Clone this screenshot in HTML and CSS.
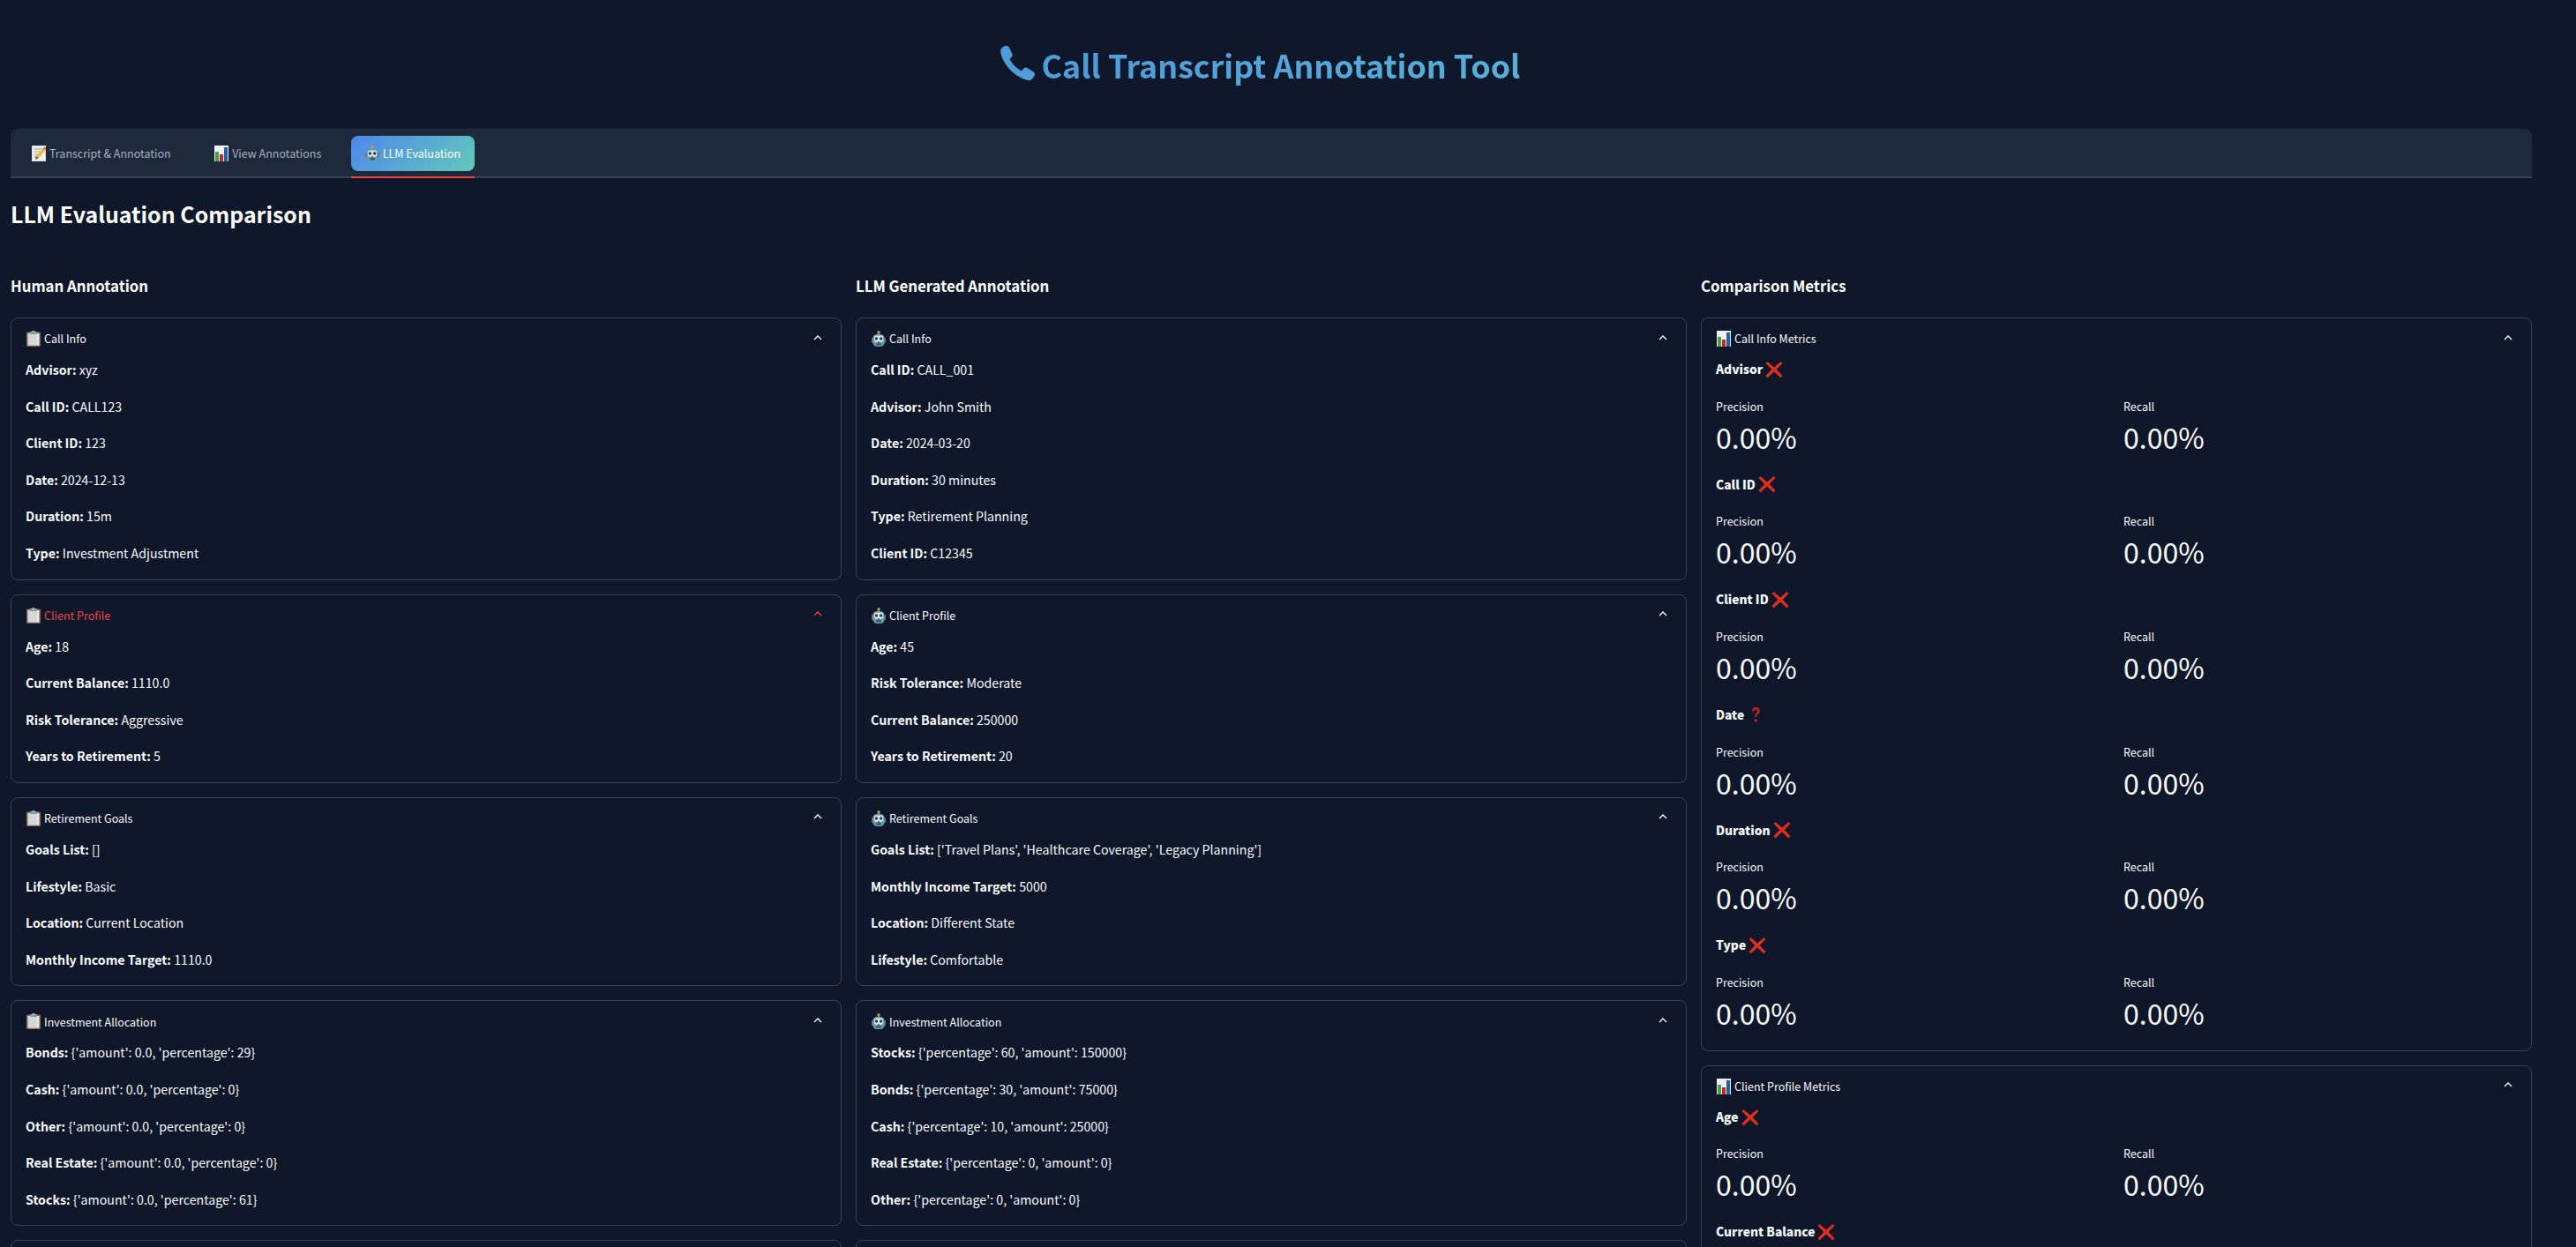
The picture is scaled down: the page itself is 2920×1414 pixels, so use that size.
FILE: index.html
```html
<!DOCTYPE html>
<html lang="en">
<head>
<meta charset="utf-8">
<title>Call Transcript Annotation Tool</title>
<link rel="stylesheet" href="styles.css">
</head>
<body>
<svg class="defs" aria-hidden="true">
  <symbol id="clip" viewBox="0 0 16 18">
    <rect x="0" y="1.5" width="16" height="16.5" rx="1" fill="#8a6a4a"/>
    <rect x="1.6" y="3" width="12.8" height="13.6" fill="#e8eaec"/>
    <rect x="2" y="3.4" width="10" height="12.6" fill="#d4d8dc"/>
    <rect x="4" y="1" width="8" height="3" fill="#8e9aa2"/>
    <rect x="6.5" y="0" width="3" height="2" fill="#a6b0b6"/>
  </symbol>
  <symbol id="memo" viewBox="0 0 16 18">
    <rect x="0" y="0" width="16" height="18" fill="#d8dcdf"/>
    <rect x="1" y="1" width="14" height="16" fill="#eef0f1"/>
    <path d="M2.5 4h10M2.5 7h8M2.5 10h6M2.5 13h5" stroke="#9aa3aa" stroke-width="1"/>
    <path d="M4 16l1-4 8-9 2.6 2.2-8 9z" fill="#f2b632"/>
    <path d="M13 3l1.2-1.2 2.2 2-1 1.4z" fill="#e2574c"/>
    <path d="M4 16l1-4 2.6 2.2z" fill="#6a5a4a"/>
  </symbol>
  <symbol id="chart" viewBox="0 0 16 18">
    <rect x="0" y="0" width="16" height="18" fill="#eef1f3"/>
    <rect x="1" y="7" width="4" height="11" fill="#43a047"/>
    <rect x="6" y="10" width="4" height="8" fill="#c62828"/>
    <rect x="11" y="2" width="4" height="16" fill="#1e5fb4"/>
  </symbol>
  <symbol id="robot" viewBox="0 0 16 18">
    <rect x="7" y="2" width="2" height="3" fill="#9a9a9a"/>
    <circle cx="8" cy="1.700" r="1.700" fill="#e8893a"/>
    <rect x="0" y="8" width="2.500" height="6" rx="1" fill="#a8574c"/>
    <rect x="13.500" y="8" width="2.500" height="6" rx="1" fill="#a8574c"/>
    <rect x="1.500" y="4" width="13" height="14" rx="4.500" fill="#5f9fb6"/>
    <rect x="2.800" y="5.500" width="10.400" height="7.500" rx="3" fill="#cfe9ef"/>
    <circle cx="5.400" cy="9" r="1.700" fill="#24424e"/>
    <circle cx="10.600" cy="9" r="1.700" fill="#24424e"/>
    <rect x="5" y="14" width="6" height="2.500" rx="1" fill="#2f5d6c"/>
    <rect x="7" y="12" width="2" height="2.500" fill="#c9483c"/>
  </symbol>
  <symbol id="cross" viewBox="0 0 20 20">
    <path d="M2.500 1L10 7.600 17.500 1 19.500 3 12.700 10 19.500 17 17.500 19.500 10 12.600 2.500 19.500 .5 17 7.300 10 .5 3z" fill="#dd2e1f"/>
  </symbol>
  <symbol id="question" viewBox="0 0 20 20">
    <path d="M5.800 5.500C5.800 2.800 7.800 1 10.400 1c2.700 0 4.400 1.700 4.400 4 0 2-1 3-2.300 4.100-1 .9-1.300 1.500-1.300 3H9.200c-.1-2.100.4-3.200 1.600-4.300.9-.8 1.300-1.500 1.300-2.500 0-1-.7-1.800-1.800-1.800-1.200 0-1.900.9-2 2z" fill="#c9241a"/>
    <circle cx="10.300" cy="16" r="1.700" fill="#c9241a"/>
  </symbol>
</svg>

<main class="page">
  <header class="hero">
    <h1 class="title">
      <svg class="phone" viewBox="0 0 39 39"><path d="M4 .5C7-.5 9 0 10 2l3.500 7.500c.5 1.500 0 2.500-1 3.500l-2 2c2.500 5 7.500 10.500 13.500 13.500l2.500-3c1-1 2-1.500 3.500-.7l7.500 4.700c1.500 1 2 2.500 1 4.500l-2 3c-1.500 1.800-3.500 2.500-6.500 1.800C14 34 3 20 .3 8-.3 5 1 2 4 .5z"/></svg>
      <span class="title-text">Call Transcript Annotation Tool</span>
    </h1>
  </header>

  <nav class="tabs">
    <a class="tab"><svg class="emoji"><use href="#memo"/></svg>Transcript &amp; Annotation</a>
    <a class="tab"><svg class="emoji"><use href="#chart"/></svg>View Annotations</a>
    <a class="tab tab-active"><svg class="emoji"><use href="#robot"/></svg>LLM Evaluation</a>
  </nav>

  <h2 class="page-heading">LLM Evaluation Comparison</h2>

  <div class="columns">
    <section class="column">
      <h3 class="column-heading">Human Annotation</h3>

      <div class="card">
        <div class="card-head"><svg class="emoji"><use href="#clip"/></svg><span class="card-title">Call Info</span><svg class="chev" viewBox="0 0 10 6"><path d="M1 5l4-4 4 4"/></svg></div>
        <p class="row"><b>Advisor:</b> xyz</p>
        <p class="row"><b>Call ID:</b> CALL123</p>
        <p class="row"><b>Client ID:</b> 123</p>
        <p class="row"><b>Date:</b> 2024-12-13</p>
        <p class="row"><b>Duration:</b> 15m</p>
        <p class="row"><b>Type:</b> Investment Adjustment</p>
      </div>

      <div class="card card-hover">
        <div class="card-head"><svg class="emoji"><use href="#clip"/></svg><span class="card-title">Client Profile</span><svg class="chev" viewBox="0 0 10 6"><path d="M1 5l4-4 4 4"/></svg></div>
        <p class="row"><b>Age:</b> 18</p>
        <p class="row"><b>Current Balance:</b> 1110.0</p>
        <p class="row"><b>Risk Tolerance:</b> Aggressive</p>
        <p class="row"><b>Years to Retirement:</b> 5</p>
      </div>

      <div class="card">
        <div class="card-head"><svg class="emoji"><use href="#clip"/></svg><span class="card-title">Retirement Goals</span><svg class="chev" viewBox="0 0 10 6"><path d="M1 5l4-4 4 4"/></svg></div>
        <p class="row"><b>Goals List:</b> []</p>
        <p class="row"><b>Lifestyle:</b> Basic</p>
        <p class="row"><b>Location:</b> Current Location</p>
        <p class="row"><b>Monthly Income Target:</b> 1110.0</p>
      </div>

      <div class="card">
        <div class="card-head"><svg class="emoji"><use href="#clip"/></svg><span class="card-title">Investment Allocation</span><svg class="chev" viewBox="0 0 10 6"><path d="M1 5l4-4 4 4"/></svg></div>
        <p class="row"><b>Bonds:</b> {'amount': 0.0, 'percentage': 29}</p>
        <p class="row"><b>Cash:</b> {'amount': 0.0, 'percentage': 0}</p>
        <p class="row"><b>Other:</b> {'amount': 0.0, 'percentage': 0}</p>
        <p class="row"><b>Real Estate:</b> {'amount': 0.0, 'percentage': 0}</p>
        <p class="row"><b>Stocks:</b> {'amount': 0.0, 'percentage': 61}</p>
      </div>

      <div class="card card-next"></div>
    </section>

    <section class="column">
      <h3 class="column-heading">LLM Generated Annotation</h3>

      <div class="card">
        <div class="card-head"><svg class="emoji"><use href="#robot"/></svg><span class="card-title">Call Info</span><svg class="chev" viewBox="0 0 10 6"><path d="M1 5l4-4 4 4"/></svg></div>
        <p class="row"><b>Call ID:</b> CALL_001</p>
        <p class="row"><b>Advisor:</b> John Smith</p>
        <p class="row"><b>Date:</b> 2024-03-20</p>
        <p class="row"><b>Duration:</b> 30 minutes</p>
        <p class="row"><b>Type:</b> Retirement Planning</p>
        <p class="row"><b>Client ID:</b> C12345</p>
      </div>

      <div class="card">
        <div class="card-head"><svg class="emoji"><use href="#robot"/></svg><span class="card-title">Client Profile</span><svg class="chev" viewBox="0 0 10 6"><path d="M1 5l4-4 4 4"/></svg></div>
        <p class="row"><b>Age:</b> 45</p>
        <p class="row"><b>Risk Tolerance:</b> Moderate</p>
        <p class="row"><b>Current Balance:</b> 250000</p>
        <p class="row"><b>Years to Retirement:</b> 20</p>
      </div>

      <div class="card">
        <div class="card-head"><svg class="emoji"><use href="#robot"/></svg><span class="card-title">Retirement Goals</span><svg class="chev" viewBox="0 0 10 6"><path d="M1 5l4-4 4 4"/></svg></div>
        <p class="row"><b>Goals List:</b> ['Travel Plans', 'Healthcare Coverage', 'Legacy Planning']</p>
        <p class="row"><b>Monthly Income Target:</b> 5000</p>
        <p class="row"><b>Location:</b> Different State</p>
        <p class="row"><b>Lifestyle:</b> Comfortable</p>
      </div>

      <div class="card">
        <div class="card-head"><svg class="emoji"><use href="#robot"/></svg><span class="card-title">Investment Allocation</span><svg class="chev" viewBox="0 0 10 6"><path d="M1 5l4-4 4 4"/></svg></div>
        <p class="row"><b>Stocks:</b> {'percentage': 60, 'amount': 150000}</p>
        <p class="row"><b>Bonds:</b> {'percentage': 30, 'amount': 75000}</p>
        <p class="row"><b>Cash:</b> {'percentage': 10, 'amount': 25000}</p>
        <p class="row"><b>Real Estate:</b> {'percentage': 0, 'amount': 0}</p>
        <p class="row"><b>Other:</b> {'percentage': 0, 'amount': 0}</p>
      </div>

      <div class="card card-next"></div>
    </section>

    <section class="column">
      <h3 class="column-heading">Comparison Metrics</h3>

      <div class="card">
        <div class="card-head"><svg class="emoji"><use href="#chart"/></svg><span class="card-title">Call Info Metrics</span><svg class="chev" viewBox="0 0 10 6"><path d="M1 5l4-4 4 4"/></svg></div>
        <div class="group">
          <p class="field"><b>Advisor</b><svg class="mark"><use href="#cross"/></svg></p>
          <div class="metrics">
            <div><div class="metric-label">Precision</div><div class="metric-value">0.00%</div></div>
            <div><div class="metric-label">Recall</div><div class="metric-value">0.00%</div></div>
          </div>
        </div>
        <div class="group">
          <p class="field"><b>Call ID</b><svg class="mark"><use href="#cross"/></svg></p>
          <div class="metrics">
            <div><div class="metric-label">Precision</div><div class="metric-value">0.00%</div></div>
            <div><div class="metric-label">Recall</div><div class="metric-value">0.00%</div></div>
          </div>
        </div>
        <div class="group">
          <p class="field"><b>Client ID</b><svg class="mark"><use href="#cross"/></svg></p>
          <div class="metrics">
            <div><div class="metric-label">Precision</div><div class="metric-value">0.00%</div></div>
            <div><div class="metric-label">Recall</div><div class="metric-value">0.00%</div></div>
          </div>
        </div>
        <div class="group">
          <p class="field"><b>Date</b><svg class="mark"><use href="#question"/></svg></p>
          <div class="metrics">
            <div><div class="metric-label">Precision</div><div class="metric-value">0.00%</div></div>
            <div><div class="metric-label">Recall</div><div class="metric-value">0.00%</div></div>
          </div>
        </div>
        <div class="group">
          <p class="field"><b>Duration</b><svg class="mark"><use href="#cross"/></svg></p>
          <div class="metrics">
            <div><div class="metric-label">Precision</div><div class="metric-value">0.00%</div></div>
            <div><div class="metric-label">Recall</div><div class="metric-value">0.00%</div></div>
          </div>
        </div>
        <div class="group">
          <p class="field"><b>Type</b><svg class="mark"><use href="#cross"/></svg></p>
          <div class="metrics">
            <div><div class="metric-label">Precision</div><div class="metric-value">0.00%</div></div>
            <div><div class="metric-label">Recall</div><div class="metric-value">0.00%</div></div>
          </div>
        </div>
      </div>

      <div class="card">
        <div class="card-head"><svg class="emoji"><use href="#chart"/></svg><span class="card-title">Client Profile Metrics</span><svg class="chev" viewBox="0 0 10 6"><path d="M1 5l4-4 4 4"/></svg></div>
        <div class="group">
          <p class="field"><b>Age</b><svg class="mark"><use href="#cross"/></svg></p>
          <div class="metrics">
            <div><div class="metric-label">Precision</div><div class="metric-value">0.00%</div></div>
            <div><div class="metric-label">Recall</div><div class="metric-value">0.00%</div></div>
          </div>
        </div>
        <div class="group">
          <p class="field"><b>Current Balance</b><svg class="mark"><use href="#cross"/></svg></p>
        </div>
      </div>
    </section>
  </div>
</main>
</body>
</html>
```
FILE: styles.css
```css
* { box-sizing: border-box; }
html, body { height: 1414px; overflow: hidden; }
body {
  margin: 0;
  background: #0f172a;
  color: #f8fafc;
  font-family: "Noto Sans CJK SC", "Source Sans Pro", "Noto Sans", sans-serif;
  font-size: 14.2px;
  line-height: 25.6px;
}
.defs { display: none; }
.page { padding: 0 50px 0 12px; }

.hero { height: 146px; display: flex; align-items: center; justify-content: center; padding: 0 25px 0 0; }
.title { margin: 0; display: flex; align-items: center; gap: 8px; font-size: 35.8px; line-height: 50px; font-weight: 700; }
.title-text {
  background: linear-gradient(90deg, #4f9ad9, #58b0d8);
  -webkit-background-clip: text;
  background-clip: text;
  color: transparent;
}
.phone { width: 39px; height: 39px; fill: #4f9cdc; margin-top: -4px; }

.tabs {
  height: 56px;
  padding: 8px 8px 6px;
  display: flex;
  gap: 17.5px;
  background: #1e293b;
  border-radius: 8px 8px 0 0;
  border-bottom: 2px solid #334155;
  position: relative;
}
.tab {
  height: 40px;
  padding: 0 16px;
  display: flex;
  align-items: center;
  gap: 4px;
  font-size: 12.5px;
  color: #a3afc0;
  border-radius: 8px;
  position: relative;
}
.tab-active {
  color: #fff;
  background: linear-gradient(135deg, #4f86ee, #62c9b8);
}
.tab-active::after {
  content: "";
  position: absolute;
  left: 0;
  right: 0;
  top: 46px;
  height: 2px;
  background: #ef4444;
}
.emoji { width: 16px; height: 18px; flex: none; }

.page-heading { margin: 20px 0 47px; font-size: 24.9px; line-height: 40px; font-weight: 700; color: #fff; }

.columns { display: grid; grid-template-columns: repeat(3, 942px); column-gap: 16px; }
.column { min-width: 0; }
.column-heading { margin: 0 0 21px; font-size: 16.8px; line-height: 30px; font-weight: 700; color: #fff; }

.card { border: 1px solid #334155; border-radius: 8px; margin-bottom: 16px; }
.card-next { height: 120px; }
.card-head { height: 46px; padding: 0 16px 0 17px; display: flex; align-items: center; gap: 4px; font-size: 12.5px; color: #f8fafc; }
.card-title { flex: 1; }
.card-hover .card-head { color: #ef4444; }
.chev { width: 10px; height: 6px; fill: none; stroke: currentColor; stroke-width: 1.4; margin-right: 5px; margin-top: -3px; }

.row { margin: 0 16px 16px; height: 25.6px; }
.row b { font-weight: 700; }

.group { margin: 0 16px; height: 130.65px; }
.field { margin: 0 0 18px; height: 23.6px; display: flex; align-items: center; gap: 3px; font-size: 13.8px; font-weight: 700; }
.mark { width: 20px; height: 20px; flex: none; }
.metrics { display: grid; grid-template-columns: 1fr 1fr; column-gap: 16px; }
.metric-label { height: 24px; line-height: 24px; font-size: 12.5px; color: #f8fafc; }
.metric-value { height: 49px; line-height: 45px; font-size: 32px; color: #f8fafc; }
```
